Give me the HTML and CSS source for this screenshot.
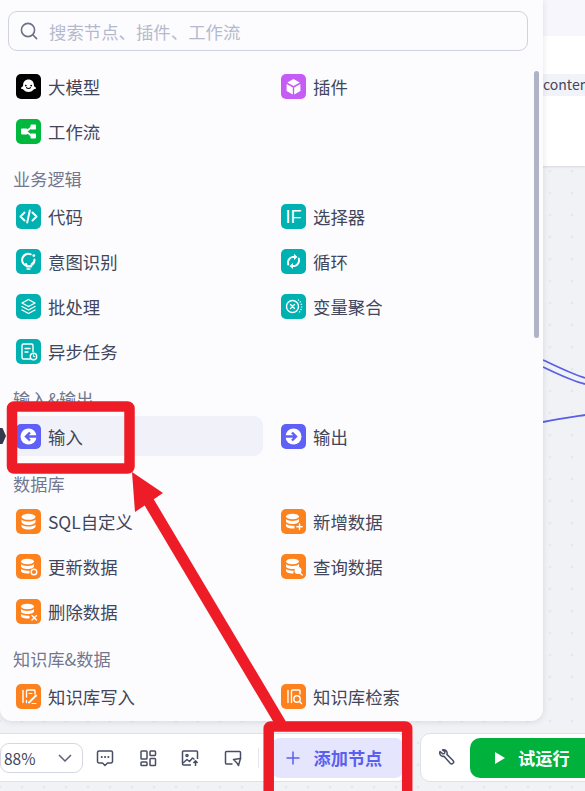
FILE: index.html
```html
<!DOCTYPE html>
<html lang="zh-CN">

<head>
    <meta charset="UTF-8">
    <meta name="viewport" content="width=device-width, initial-scale=1.0">
    <title>添加节点</title>
    <link rel="stylesheet" href="styles.css">
</head>

<body>
    <div class="page">
        <!-- canvas behind the panel -->
        <div class="top-card">
            <div class="top-strip"></div>
            <div class="content-tag">content</div>
        </div>
        <svg class="edges" viewBox="0 0 585 791" width="585" height="791">
            <path d="M543 360 C558 367 572 374 585 378"/>
            <path d="M543 367 C558 374 572 381 585 384"/>
            <path d="M543 422 C558 419 572 417 585 415"/>
        </svg>

        <div class="panel">
            <div class="search">
                <svg class="search-icon" viewBox="0 0 20 20" width="20" height="20"><circle cx="9" cy="9" r="6.6"/><path d="M14 14l3.6 3.6"/></svg>
                <span class="search-text">搜索节点、插件、工作流</span>
            </div>

            <div class="node-grid first">
                <div class="node-item">
                    <svg class="tile black" viewBox="0 0 25 25"><path class="solid" d="M12.5 5.500c3.400 0 5.300 2.500 5.400 5.400 0 1 .3 1.600 1.500 2.300 1 .7.900 1.600-.5 1.800-.8.100-1.200.5-1.700 1.100-1 1.300-2.600 1.900-4.700 1.900s-3.700-.6-4.700-1.900c-.5-.6-.9-1-1.700-1.100-1.400-.2-1.500-1.100-.5-1.800 1.200-.7 1.500-1.300 1.500-2.300.1-2.900 2-5.400 5.400-5.400z"/><circle class="eye" cx="9.800" cy="11.600" r=".9"/><circle class="eye" cx="15.200" cy="11.600" r=".9"/><path class="cut" d="M10.500 13.600c.8 1.100 3.200 1.100 4 0"/></svg>
                    <span>大模型</span>
                </div>
                <div class="node-item">
                    <svg class="tile purple" viewBox="0 0 25 25"><path class="solid" d="M12.5 5l6.300 3.500-6.300 3.500-6.200-3.500z"/><path class="solid" d="M5.600 10l6.200 3.500v7L5.600 17z"/><path class="solid" d="M19.400 10l-6.200 3.500v7l6.200-3.500z"/></svg>
                    <span>插件</span>
                </div>
                <div class="node-item">
                    <svg class="tile green" viewBox="0 0 25 25"><path class="line" d="M10 12.500l6-4.500M10 12.500l6 4.500"/><rect class="solid" x="5" y="9.500" width="6.500" height="6" rx="1"/><rect class="solid" x="14.500" y="5.500" width="5.500" height="5" rx="1"/><rect class="solid" x="14.500" y="14.500" width="5.500" height="5" rx="1"/></svg>
                    <span>工作流</span>
                </div>
            </div>

            <div class="group-title">业务逻辑</div>
            <div class="node-grid">
                <div class="node-item">
                    <svg class="tile teal" viewBox="0 0 25 25"><path class="line" d="M8.500 8.500l-4 4 4 4M16.500 8.500l4 4-4 4M13.800 6.500l-2.600 12"/></svg>
                    <span>代码</span>
                </div>
                <div class="node-item">
                    <svg class="tile teal" viewBox="0 0 25 25"><text class="tile-text" x="12.500" y="19" text-anchor="middle">IF</text></svg>
                    <span>选择器</span>
                </div>
                <div class="node-item">
                    <svg class="tile teal" viewBox="0 0 25 25"><path class="line" d="M14.700 5.300a6.200 6.200 0 1 0 3.800 5.200c0 2-1 3.300-2.700 4.500l-.6 2.500h-4.400l-.6-2.500"/><path class="line thin" d="M11 20h3"/><circle class="solid" cx="17.800" cy="6.600" r="1.400"/></svg>
                    <span>意图识别</span>
                </div>
                <div class="node-item">
                    <svg class="tile teal" viewBox="0 0 25 25"><path class="line" d="M7.200 15.500a6 6 0 0 1 4.300-7.600h2M17.800 9.500a6 6 0 0 1-4.300 7.600h-2"/><path class="solid" d="M13 4.800l3.400 3.100-3.400 3.100zM12 13.900l-3.400 3.100 3.400 3.100z"/></svg>
                    <span>循环</span>
                </div>
                <div class="node-item">
                    <svg class="tile teal" viewBox="0 0 25 25"><path class="line thin" d="M12.500 5.500l6.500 3.500-6.500 3.500L6 9z"/><path class="line thin" d="M6 12.500l6.500 3.500 6.500-3.500M6 16l6.500 3.500L19 16"/></svg>
                    <span>批处理</span>
                </div>
                <div class="node-item">
                    <svg class="tile teal" viewBox="0 0 25 25"><circle class="line thin" cx="11.500" cy="12.500" r="6"/><path class="line thin" d="M9.500 10.500l4 4M13.500 10.500l-4 4"/><path class="line thin dotted" d="M17 5.800a8 8 0 0 1 0 13.400"/></svg>
                    <span>变量聚合</span>
                </div>
                <div class="node-item">
                    <svg class="tile teal" viewBox="0 0 25 25"><path class="line thin" d="M14 20H7.500A1.500 1.500 0 0 1 6 18.500v-12A1.500 1.500 0 0 1 7.500 5h8A1.500 1.500 0 0 1 17 6.500v6"/><path class="line thin" d="M9 9.500h5M9 13h3"/><circle class="line thin" cx="17.500" cy="17.500" r="3.200"/><path class="line hair" d="M17.500 15.800v1.800h1.400"/></svg>
                    <span>异步任务</span>
                </div>
            </div>

            <div class="group-title">输入&amp;输出</div>
            <div class="node-grid">
                <div class="node-item active">
                    <svg class="tile indigo" viewBox="0 0 25 25"><circle class="solid" cx="12.500" cy="12.500" r="8"/><path class="arrow-cut" d="M21 12.500H10.500M14 8.500l-4 4 4 4"/></svg>
                    <span>输入</span>
                </div>
                <div class="node-item">
                    <svg class="tile indigo" viewBox="0 0 25 25"><circle class="solid" cx="12.500" cy="12.500" r="8"/><path class="arrow-cut" d="M4 12.500h10.500M11 8.500l4 4-4 4"/></svg>
                    <span>输出</span>
                </div>
            </div>

            <div class="group-title">数据库</div>
            <div class="node-grid">
                <div class="node-item">
                    <svg class="tile orange" viewBox="0 0 25 25"><ellipse class="solid" cx="12.500" cy="7.800" rx="7" ry="3"/><path class="solid" d="M5.500 10.500c1.500 1.500 4 2 7 2s5.500-.5 7-2v2.500c0 1.500-3 3-7 3s-7-1.500-7-3z"/><path class="solid" d="M5.500 15.500c1.500 1.500 4 2 7 2s5.500-.5 7-2v2c0 1.500-3 3-7 3s-7-1.500-7-3z"/></svg>
                    <span>SQL自定义</span>
                </div>
                <div class="node-item">
                    <svg class="tile orange" viewBox="0 0 25 25"><ellipse class="solid" cx="11.500" cy="7.500" rx="6.500" ry="2.800"/><path class="solid" d="M5 10c1.500 1.400 3.800 1.900 6.500 1.900s5-.5 6.500-1.900v2.500c0 1-2.500 2.500-6.500 2.500S5 13.500 5 12.500z"/><path class="solid" d="M5 15c1.500 1.200 3.800 1.700 6.500 1.700h2v2.800h-2C7.500 19.500 5 18 5 17z"/><path class="line thin" d="M18.500 15v5.500M15.800 17.800h5.400"/></svg>
                    <span>新增数据</span>
                </div>
                <div class="node-item">
                    <svg class="tile orange" viewBox="0 0 25 25"><ellipse class="solid" cx="11.500" cy="7.500" rx="6.500" ry="2.800"/><path class="solid" d="M5 10c1.500 1.400 3.800 1.900 6.500 1.900s5-.5 6.500-1.900v2.500c0 1-2.500 2.500-6.500 2.500S5 13.500 5 12.500z"/><path class="solid" d="M5 15c1.500 1.200 3.800 1.700 6.500 1.700h2v2.800h-2C7.500 19.500 5 18 5 17z"/><circle class="line thin" cx="18" cy="18" r="2.800"/></svg>
                    <span>更新数据</span>
                </div>
                <div class="node-item">
                    <svg class="tile orange" viewBox="0 0 25 25"><ellipse class="solid" cx="11.500" cy="7.500" rx="6.500" ry="2.800"/><path class="solid" d="M5 10c1.500 1.400 3.800 1.900 6.500 1.900s5-.5 6.500-1.900v2.500c0 1-2.500 2.500-6.500 2.500S5 13.500 5 12.500z"/><path class="solid" d="M5 15c1.500 1.200 3.800 1.700 6.500 1.700h1v2.800h-1C7.500 19.500 5 18 5 17z"/><circle class="solid" cx="17" cy="16.500" r="3.500"/><path class="line thin" d="M19 19l2.200 2"/></svg>
                    <span>查询数据</span>
                </div>
                <div class="node-item">
                    <svg class="tile orange" viewBox="0 0 25 25"><ellipse class="solid" cx="11.500" cy="7.500" rx="6.500" ry="2.800"/><path class="solid" d="M5 10c1.500 1.400 3.800 1.900 6.500 1.900s5-.5 6.500-1.900v2.500c0 1-2.500 2.500-6.500 2.500S5 13.500 5 12.500z"/><path class="solid" d="M5 15c1.500 1.200 3.800 1.700 6.500 1.700h2v2.800h-2C7.500 19.500 5 18 5 17z"/><path class="line thin" d="M16 16.500l4.500 4.500M20.500 16.500L16 21"/></svg>
                    <span>删除数据</span>
                </div>
            </div>

            <div class="group-title">知识库&amp;数据</div>
            <div class="node-grid">
                <div class="node-item">
                    <svg class="tile orange" viewBox="0 0 25 25"><path class="line thin" d="M7 6.500v12"/><path class="line thin" d="M10.500 13V7a1 1 0 0 1 1-1H18a1 1 0 0 1 1 1v3M10.500 18.500v-2"/><path class="line" d="M13 18.500l7-7"/><path class="line hair" d="M13 9.500h3M16 19.500h4"/></svg>
                    <span>知识库写入</span>
                </div>
                <div class="node-item">
                    <svg class="tile orange" viewBox="0 0 25 25"><path class="line thin" d="M7 6.500v12"/><path class="line thin" d="M10.500 18.500V7a1 1 0 0 1 1-1H18a1 1 0 0 1 1 1v3"/><circle class="line thin" cx="16" cy="15" r="3.200"/><path class="line thin" d="M18.300 17.300l2.200 2.200"/></svg>
                    <span>知识库检索</span>
                </div>
            </div>

            <div class="scrollbar"></div>
        </div>

        <div class="bottom-bar">
            <div class="tools">
                <div class="zoom-select">
                    <span>88%</span>
                    <svg viewBox="0 0 14 8" width="14" height="8"><path d="M1 1l6 6 6-6"/></svg>
                </div>
                <div class="tool-icons">
                    <svg viewBox="0 0 18 18" width="18" height="18"><path d="M3 2h12a1.500 1.500 0 0 1 1.500 1.500v9A1.500 1.500 0 0 1 15 14h-3.500L9 16.500 6.500 14H3a1.500 1.500 0 0 1-1.500-1.500v-9A1.500 1.500 0 0 1 3 2z"/><path class="dots" d="M5.700 8h.1M9 8h.1M12.300 8h.1"/></svg>
                    <svg viewBox="0 0 18 18" width="18" height="18"><rect x="2" y="2" width="6" height="8" rx=".8"/><rect x="11" y="2" width="5.500" height="4.500" rx=".8"/><rect x="2" y="13" width="6" height="3.500" rx=".8"/><rect x="11" y="9.500" width="5.500" height="7" rx=".8"/></svg>
                    <svg viewBox="0 0 18 18" width="18" height="18"><path d="M10 16H2.500A1 1 0 0 1 1.500 15V3a1 1 0 0 1 1-1h13a1 1 0 0 1 1 1v7"/><circle cx="6" cy="6.500" r="1"/><path d="M2 14l4-3.500 2.500 2 3-3.500 2 1.500"/><path d="M14.500 17v-5M12.500 14l2-2.200 2 2.200"/></svg>
                    <svg viewBox="0 0 18 18" width="18" height="18"><path d="M8.500 15H2.500A1 1 0 0 1 1.500 14V3.500a1 1 0 0 1 1-1h13a1 1 0 0 1 1 1V10"/><path d="M9.500 10.500l7-1-2 7-1.800-2.800z"/></svg>
                </div>
                <div class="divider"></div>
                <div class="add-btn">
                    <svg viewBox="0 0 14 14" width="14" height="14"><path d="M7 .5v13M.5 7h13"/></svg>
                    <span>添加节点</span>
                </div>
            </div>
            <div class="run-box">
                <svg class="wrench" viewBox="0 0 18 18" width="18" height="18"><path d="M3 2.500l2.800 2.300 1.700-.4.500-1.800L5.500 1c2-.8 4.300.4 4.600 2.600.1.700 0 1.300-.2 1.800l6.100 6.100c.8.800.8 2 0 2.800-.8.800-2 .8-2.800 0L7 7.200c-2.500.8-5-1.700-4-4.700z"/></svg>
                <div class="run-btn">
                    <svg viewBox="0 0 10 12" width="10" height="12"><path d="M0 0l10 6-10 6z"/></svg>
                    <span>试运行</span>
                </div>
            </div>
        </div>

        <!-- red annotation drawn on top of the screenshot -->
        <svg class="marks" viewBox="0 0 585 791" width="585" height="791">
            <path class="handle" d="M0 428h2.500l3.500 8-3.500 8H0z"/>
            <rect class="mark-box" x="12" y="406.500" width="117.500" height="62" rx="2"/>
            <rect class="mark-box" x="268.700" y="726.500" width="138.500" height="80" rx="2"/>
            <path class="mark-line" d="M146 497L281 724"/>
            <path class="mark-head" d="M132 472L163 493L135 512z"/>
        </svg>
    </div>
</body>

</html>
```

FILE: styles.css
```css
* {
    box-sizing: border-box;
}

body {
    margin: 0;
    padding: 0;
    font-family: "Noto Sans CJK SC", "Noto Sans", sans-serif;
    color: #42465a;
}

.page {
    position: relative;
    width: 585px;
    height: 791px;
    overflow: hidden;
    background-color: #f1f2f5;
    background-image: radial-gradient(circle, #e6e7ec 1.5px, transparent 1.6px);
    background-size: 22px 22px;
    background-position: 11px 6px;
}

/* Canvas */

.top-card {
    position: absolute;
    top: 0;
    right: 0;
    width: 60px;
    height: 166px;
    background: #fff;
    box-shadow: 0 1px 2px rgba(60, 65, 90, 0.15);
}

.top-strip {
    height: 36px;
    background: #f6f6fc;
}

.content-tag {
    margin: 38px 0 0 17px;
    height: 22px;
    line-height: 21px;
    padding-left: 1px;
    font-size: 14px;
    white-space: nowrap;
    background: #f2f3f9;
}

.edges {
    position: absolute;
    top: 0;
    left: 0;
}

.edges path {
    fill: none;
    stroke: #5a5fe6;
    stroke-width: 1.8;
}

/* Node panel */

.panel {
    position: absolute;
    top: 0;
    left: 0;
    width: 543px;
    height: 721px;
    padding: 11px 15px 0 8px;
    overflow: hidden;
    background: #fcfcff;
    border-radius: 0 0 12px 12px;
    box-shadow: 0 1px 6px rgba(60, 65, 90, 0.14);
}

.search {
    display: flex;
    align-items: center;
    gap: 10px;
    height: 40px;
    padding-left: 10px;
    border: 1px solid #cfd2e2;
    border-radius: 9px;
}

.search-icon {
    flex: none;
    fill: none;
    stroke: #6c7086;
    stroke-width: 1.6;
    stroke-linecap: round;
}

.search-text {
    font-size: 17.4px;
    color: #b6b9cc;
}

.node-grid {
    display: grid;
    grid-template-columns: 255px 255px;
    column-gap: 10px;
    row-gap: 5px;
}

.node-grid.first {
    margin-top: 15px;
}

.group-title {
    height: 24px;
    margin: 16px 0 5px 5px;
    line-height: 24px;
    font-size: 17.2px;
    color: #73778d;
}

.node-item {
    display: flex;
    align-items: center;
    gap: 7px;
    height: 40px;
    padding-left: 8px;
    font-size: 17.4px;
    border-radius: 9px;
}

.node-item.active {
    background: #f0f1f9;
}

.tile {
    flex: none;
    width: 25px;
    height: 25px;
    margin-top: 1px;
    border-radius: 5px;
}

.black { background: #000; }
.purple { background: #c65cf6; }
.green { background: #00b83e; }
.teal { background: #00b1b1; }
.indigo { background: #5f61f6; }
.orange { background: #fd811c; }

.solid {
    fill: #fff;
}

.eye {
    fill: #000;
}

.cut {
    fill: none;
    stroke: #000;
    stroke-width: 1.1;
    stroke-linecap: round;
}

.arrow-cut {
    fill: none;
    stroke: #5f61f6;
    stroke-width: 2.4;
}

.line {
    fill: none;
    stroke: #fff;
    stroke-width: 2;
    stroke-linecap: round;
    stroke-linejoin: round;
}

.line.thin {
    stroke-width: 1.4;
}

.line.hair {
    stroke-width: 1;
}

.line.dotted {
    stroke-dasharray: 1 1.6;
    stroke-linecap: butt;
}

.tile-text {
    font-family: "Liberation Sans", sans-serif;
    font-size: 18px;
    fill: #fff;
}

.scrollbar {
    position: absolute;
    top: 71px;
    left: 534px;
    width: 5px;
    height: 267px;
    border-radius: 3px;
    background: #b0b3c6;
}

/* Bottom bar */

.bottom-bar {
    position: absolute;
    left: -10px;
    top: 733px;
    display: flex;
    gap: 12px;
}

.tools, .run-box {
    flex: none;
    display: flex;
    align-items: center;
    height: 49px;
    background: #fff;
    border: 1px solid #dfe1ea;
    border-radius: 10px;
}

.tools {
    width: 418px;
    padding-left: 9px;
}

.run-box {
    padding-left: 16px;
}

.zoom-select {
    flex: none;
    display: flex;
    align-items: center;
    justify-content: space-between;
    width: 83px;
    height: 30px;
    padding: 0 10px 0 3px;
    font-size: 15.5px;
    border: 1px solid #d5d7e3;
    border-radius: 9px;
}

.zoom-select svg {
    fill: none;
    stroke: #5c6075;
    stroke-width: 1.5;
}

.tool-icons {
    display: flex;
    gap: 24.5px;
    margin-left: 13px;
}

.tool-icons svg {
    fill: none;
    stroke: #4a4e63;
    stroke-width: 1.5;
    stroke-linejoin: round;
}

.tool-icons .dots {
    stroke-width: 2;
    stroke-linecap: round;
}

.divider {
    width: 1px;
    height: 20px;
    margin-left: 16px;
    background: #e3e4ec;
}

.add-btn {
    flex: none;
    display: flex;
    align-items: center;
    gap: 14px;
    width: 131px;
    height: 40px;
    margin-left: 13px;
    padding-left: 14px;
    font-size: 17.2px;
    font-weight: 700;
    color: #5b5fee;
    background: #e5e6fe;
    border-radius: 8px;
}

.add-btn svg {
    fill: none;
    stroke: #5b5fee;
    stroke-width: 1.5;
}

.wrench {
    flex: none;
    fill: none;
    stroke: #4a4e63;
    stroke-width: 1.5;
    stroke-linejoin: round;
}

.run-btn {
    flex: none;
    display: flex;
    align-items: center;
    gap: 13px;
    width: 140px;
    height: 40px;
    margin-left: 15px;
    padding-left: 25px;
    font-size: 17.2px;
    font-weight: 700;
    color: #fff;
    background: #00b23c;
    border-radius: 10px;
}

.run-btn svg {
    fill: #fff;
}

/* Annotation overlay */

.marks {
    position: absolute;
    top: 0;
    left: 0;
}

.handle {
    fill: #33384a;
}

.mark-box {
    fill: none;
    stroke: #ee1c27;
    stroke-width: 10.5;
}

.mark-line {
    fill: none;
    stroke: #ee1c27;
    stroke-width: 11;
}

.mark-head {
    fill: #ee1c27;
}
```
